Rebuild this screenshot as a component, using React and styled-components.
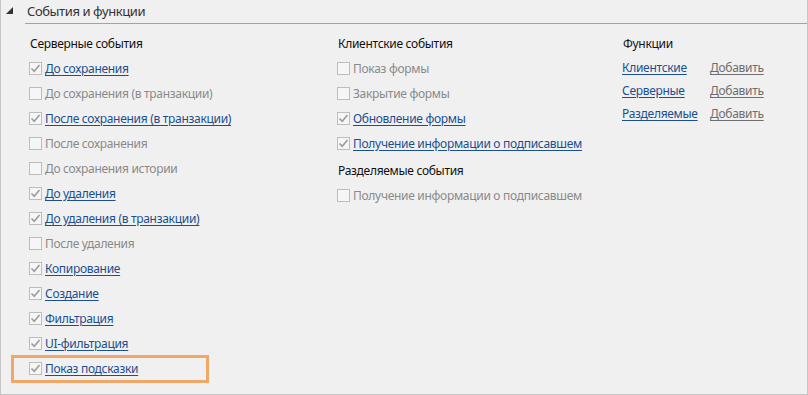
import React from 'react';
import styled, { createGlobalStyle } from 'styled-components';

const GlobalStyle = createGlobalStyle`
  html, body {
    margin: 0;
    padding: 0;
    background: #f0f0f0;
  }
  body {
    font-family: "Noto Sans", "Open Sans", sans-serif;
    font-size: 12px;
    letter-spacing: -0.3px;
  }
`;

const Panel = styled.div`
  width: 808px;
  height: 395px;
  box-sizing: border-box;
  background: #f0f0f0;
  border-left: 1px solid #c6c6c6;
  border-right: 1px solid #c6c6c6;
  border-bottom: 1px solid #c6c6c6;
  display: flex;
  flex-direction: column;
`;

const Header = styled.div`
  display: flex;
  align-items: stretch;
  height: 24px;
`;

const Toggle = styled.div`
  width: 24px;
  display: flex;
  align-items: flex-start;
  padding: 7px 0 0 5px;
  box-sizing: border-box;
`;

const HeaderTitle = styled.div`
  flex: 1;
  border-bottom: 1px solid #a3a3a3;
  color: #333;
  font-size: 13px;
  letter-spacing: -0.4px;
  line-height: 23px;
  padding-left: 2px;
`;

const Body = styled.div`
  display: grid;
  grid-template-columns: 308px 285px 1fr;
  padding: 10px 0 0 28px;
`;

const Column = styled.div`
  display: flex;
  flex-direction: column;
`;

const SectionTitle = styled.div`
  height: 20px;
  line-height: 20px;
  color: #111;
  margin-top: ${({ $gap }) => $gap || 0}px;
  margin-bottom: 2px;
  padding-left: 1px;
`;

const Row = styled.div`
  display: flex;
  align-items: center;
  height: 25px;
  box-sizing: border-box;
  gap: 3px;
  ${({ $marked }) =>
    $marked &&
    `
    border: 3px solid #f0a767;
    margin: -1.5px 0 -1.5px -18px;
    height: 28px;
    width: 198px;
    padding-left: 15px;
  `}
`;

const Box = styled.span`
  width: 13px;
  height: 13px;
  box-sizing: border-box;
  border: 1px solid #bdbdbd;
  background: #f6f6f6;
  display: flex;
  align-items: center;
  justify-content: center;
  flex: none;
`;

const Label = styled.span`
  color: ${({ $on }) => ($on ? '#1b4f8f' : '#8a8a8a')};
  text-decoration: ${({ $on }) => ($on ? 'underline' : 'none')};
  text-underline-offset: 2px;
  white-space: nowrap;
`;

const FuncRow = styled.div`
  display: grid;
  grid-template-columns: 88px auto;
  height: 23px;
  align-items: center;
`;

const Link = styled.span`
  color: ${({ $muted }) => ($muted ? '#6e6e6e' : '#1b4f8f')};
  text-decoration: underline;
  text-underline-offset: 2px;
  white-space: nowrap;
`;

const Check = () => (
  <svg width="11" height="11" viewBox="0 0 11 11">
    <path d="M1.5 5.5 L4.2 8.3 L9.5 2" fill="none" stroke="#9c9c9c" strokeWidth="1.6" />
  </svg>
);

const Item = ({ on, marked, children }) => (
  <Row $marked={marked}>
    <Box>{on && <Check />}</Box>
    <Label $on={on}>{children}</Label>
  </Row>
);

const server = [
  ['До сохранения', true],
  ['До сохранения (в транзакции)', false],
  ['После сохранения (в транзакции)', true],
  ['После сохранения', false],
  ['До сохранения истории', false],
  ['До удаления', true],
  ['До удаления (в транзакции)', true],
  ['После удаления', false],
  ['Копирование', true],
  ['Создание', true],
  ['Фильтрация', true],
  ['UI-фильтрация', true],
];

const client = [
  ['Показ формы', false],
  ['Закрытие формы', false],
  ['Обновление формы', true],
  ['Получение информации о подписавшем', true],
];

const funcs = ['Клиентские', 'Серверные', 'Разделяемые'];

export default function App() {
  return (
    <>
      <GlobalStyle />
      <Panel>
        <Header>
          <Toggle>
            <svg width="8" height="8" viewBox="0 0 8 8">
              <polygon points="0,7 7,7 7,0" fill="#333" />
            </svg>
          </Toggle>
          <HeaderTitle>События и функции</HeaderTitle>
        </Header>
        <Body>
          <Column>
            <SectionTitle>Серверные события</SectionTitle>
            {server.map(([t, on]) => (
              <Item key={t} on={on}>{t}</Item>
            ))}
            <Item on marked>Показ подсказки</Item>
          </Column>
          <Column>
            <SectionTitle>Клиентские события</SectionTitle>
            {client.map(([t, on]) => (
              <Item key={t} on={on}>{t}</Item>
            ))}
            <SectionTitle $gap={5}>Разделяемые события</SectionTitle>
            <Item on={false}>Получение информации о подписавшем</Item>
          </Column>
          <Column>
            <SectionTitle>Функции</SectionTitle>
            {funcs.map((f) => (
              <FuncRow key={f}>
                <Link>{f}</Link>
                <Link $muted>Добавить</Link>
              </FuncRow>
            ))}
          </Column>
        </Body>
      </Panel>
    </>
  );
}
